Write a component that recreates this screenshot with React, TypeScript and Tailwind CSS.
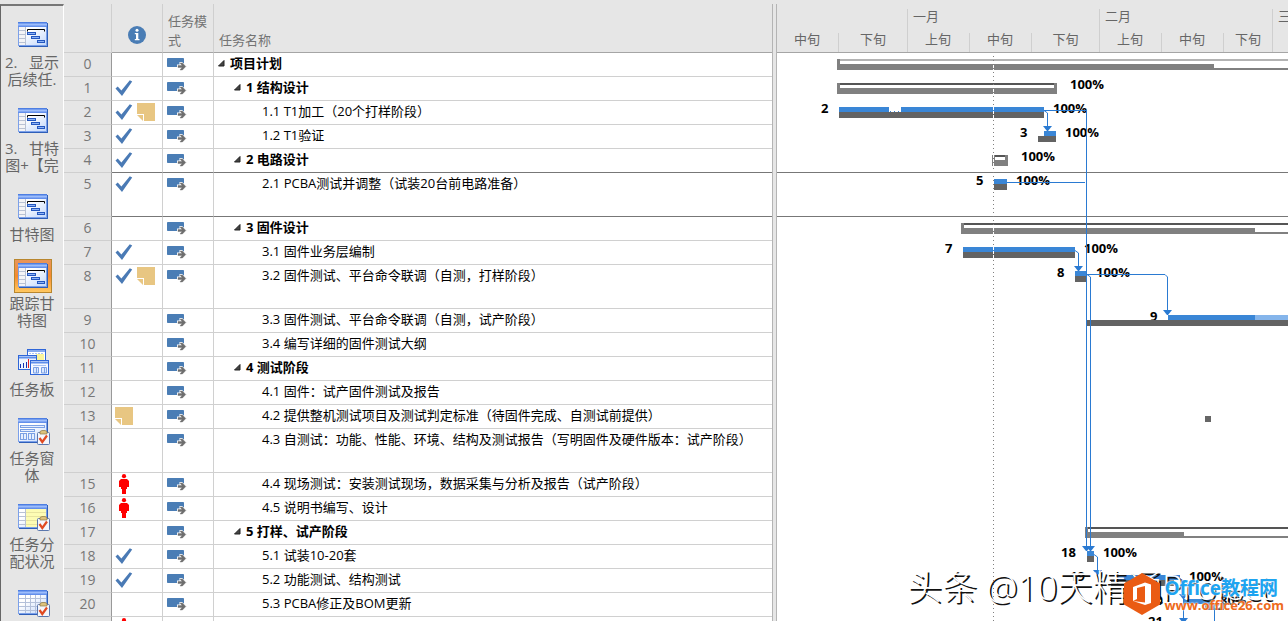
import React from 'react';

type Indicator = 'check' | 'note' | 'person';

interface Task {
  id: number;
  name: string;
  level: 0 | 1 | 2;
  summary?: boolean;
  tall?: boolean;
  marks?: Indicator[];
}

const tasks: Task[] = [
  { id: 0, name: '项目计划', level: 0, summary: true },
  { id: 1, name: '1 结构设计', level: 1, summary: true, marks: ['check'] },
  { id: 2, name: '1.1 T1加工（20个打样阶段）', level: 2, marks: ['check', 'note'] },
  { id: 3, name: '1.2 T1验证', level: 2, marks: ['check'] },
  { id: 4, name: '2 电路设计', level: 1, summary: true, marks: ['check'] },
  { id: 5, name: '2.1 PCBA测试并调整（试装20台前电路准备）', level: 2, tall: true, marks: ['check'] },
  { id: 6, name: '3 固件设计', level: 1, summary: true },
  { id: 7, name: '3.1 固件业务层编制', level: 2, marks: ['check'] },
  { id: 8, name: '3.2 固件测试、平台命令联调（自测，打样阶段）', level: 2, tall: true, marks: ['check', 'note'] },
  { id: 9, name: '3.3 固件测试、平台命令联调（自测，试产阶段）', level: 2 },
  { id: 10, name: '3.4 编写详细的固件测试大纲', level: 2 },
  { id: 11, name: '4 测试阶段', level: 1, summary: true },
  { id: 12, name: '4.1 固件：试产固件测试及报告', level: 2 },
  { id: 13, name: '4.2 提供整机测试项目及测试判定标准（待固件完成、自测试前提供）', level: 2, marks: ['note'] },
  { id: 14, name: '4.3 自测试：功能、性能、环境、结构及测试报告（写明固件及硬件版本：试产阶段）', level: 2, tall: true },
  { id: 15, name: '4.4 现场测试：安装测试现场，数据采集与分析及报告（试产阶段）', level: 2, marks: ['person'] },
  { id: 16, name: '4.5 说明书编写、设计', level: 2, marks: ['person'] },
  { id: 17, name: '5 打样、试产阶段', level: 1, summary: true },
  { id: 18, name: '5.1 试装10-20套', level: 2, marks: ['check'] },
  { id: 19, name: '5.2 功能测试、结构测试', level: 2, marks: ['check'] },
  { id: 20, name: '5.3 PCBA修正及BOM更新', level: 2 },
];

const SELECTED_ID = 5;

const indent = ['pl-1', 'pl-5', 'pl-9'];

/* ---------- grid icons ---------- */

const MarkIcon: React.FC<{ kind: Indicator }> = ({ kind }) => {
  if (kind === 'check') {
    return (
      <svg width="18" height="20" viewBox="0 0 18 20" role="img" aria-label="已完成">
        <path d="M0.5 10.5 L2.7 8.6 L6.4 12.4 L14.8 2.2 L17.2 3.4 L7 18 Z" fill="#4a7ab5" />
      </svg>
    );
  }
  if (kind === 'note') {
    return (
      <svg width="18" height="20" viewBox="0 0 18 20" role="img" aria-label="备注">
        <path d="M0 1 H18 V19 H7 V12 H0 Z" fill="#e8c682" />
        <path d="M0 13 H6 V19 Z" fill="#e8c682" />
      </svg>
    );
  }
  return (
    <svg width="18" height="20" viewBox="0 0 18 20" role="img" aria-label="资源过度分配">
      <circle cx="9" cy="2.2" r="2.1" fill="#ff0000" />
      <path d="M6 5 H12 L14 7 V13 H12 V15 H11 V20 H7 V15 H6 V13 H4 V7 Z" fill="#ff0000" />
    </svg>
  );
};

const ModeIcon = () => (
  <svg width="20" height="13" viewBox="0 0 20 13" role="img" aria-label="自动计划">
    <rect x="0" y="0" width="17" height="9" rx="0.8" fill="#4a7db5" />
    <path d="M10 6.5 H12.5 V4 H15 L18 6.5 V13 H10 Z" fill="#fff" />
    <path d="M11 7.5 H15 L13 5 H15.4 L18.8 8.5 L15.4 12 H13 L15 9.5 H11 Z" fill="#6e6e6e" stroke="#6e6e6e" strokeWidth="0.4" />
  </svg>
);

const InfoIcon = () => (
  <svg width="18" height="18" viewBox="0 0 18 18" role="img" aria-label="标记">
    <circle cx="9" cy="9" r="9" fill="#4a7db5" />
    <circle cx="9" cy="4.3" r="1.5" fill="#fff" />
    <path d="M6.8 7 H10.3 V13 H11.5 V14.2 H6.8 V13 H8 V8.2 H6.8 Z" fill="#fff" />
  </svg>
);

/* ---------- view bar ---------- */

const Clipboard = () => (
  <g>
    <rect x="19.5" y="14.5" width="12" height="12" rx="1" fill="#f4f6fc" stroke="#5b77ad" />
    <path d="M22 14 V13.5 L24 12.5 H27 L29 13.5 V16 H22 Z" fill="#dcc27c" stroke="#8f7a45" strokeWidth="0.7" />
    <path d="M21.5 20 L24.3 24 L29 17.5" fill="none" stroke="#e04a22" strokeWidth="2.2" />
  </g>
);

const WindowFrame: React.FC<{ children?: React.ReactNode }> = ({ children }) => (
  <svg width="32" height="27" viewBox="0 0 32 27" aria-hidden="true">
    <defs>
      <linearGradient id="viewTitle" x1="0" y1="0" x2="0" y2="1">
        <stop offset="0" stopColor="#3a6fdc" />
        <stop offset="0.5" stopColor="#9dbdfb" />
        <stop offset="1" stopColor="#5483e6" />
      </linearGradient>
      <linearGradient id="viewBody" x1="0" y1="0" x2="1" y2="1">
        <stop offset="0.3" stopColor="#fff" />
        <stop offset="1" stopColor="#c3d8fb" />
      </linearGradient>
    </defs>
    <rect x="1" y="1" width="29" height="24" fill="#2f5fb8" />
    <rect x="0" y="0" width="29" height="24" fill="#7ba0ea" />
    <rect x="1" y="5" width="27" height="18" fill="url(#viewBody)" />
    <rect x="0" y="0" width="29" height="5" fill="url(#viewTitle)" />
    {children}
  </svg>
);

const GanttView = () => (
  <WindowFrame>
    <rect x="1" y="5" width="6" height="18" fill="#f4f4f6" />
    <path d="M1 8.5 H7 M1 12.5 H7 M1 16.5 H7 M1 20.5 H7 M7.5 5 V23" stroke="#b9c2d4" />
    <path d="M9.5 9.5 V7.5 H26.5 V9.5" fill="none" stroke="#000" />
    <g fill="#8db3f7" stroke="#2457bf">
      <rect x="9.5" y="10.5" width="8" height="2" />
      <rect x="13.5" y="14.5" width="8" height="2" />
      <rect x="19.5" y="18.5" width="7" height="2" />
    </g>
  </WindowFrame>
);

const FormView = () => (
  <WindowFrame>
    <g fill="#e6effe" stroke="#7ba0e4">
      <rect x="2.5" y="7.5" width="24" height="2" />
      <rect x="2.5" y="11.5" width="14" height="2" />
      <rect x="2.5" y="15.5" width="6" height="6" />
      <rect x="10.5" y="15.5" width="6" height="6" />
    </g>
    <path d="M5.5 15 V22 M13.5 15 V22" stroke="#7ba0e4" />
    <Clipboard />
  </WindowFrame>
);

const UsageView = () => (
  <WindowFrame>
    <rect x="8" y="5" width="20" height="18" fill="#fdfcb4" />
    <path d="M1 8.5 H7 M1 12.5 H7 M1 16.5 H7 M1 20.5 H7 M7.5 5 V23" stroke="#b9c2d4" />
    <path d="M8 8.5 H28 M8 12.5 H28 M8 16.5 H28 M8 20.5 H28" stroke="#e8e4a0" />
    <Clipboard />
  </WindowFrame>
);

const SheetView = () => (
  <WindowFrame>
    <path d="M1 8.5 H28 M1 12.5 H28 M1 16.5 H28 M1 20.5 H28 M7.5 5 V23 M12.5 5 V23 M17.5 5 V23 M22.5 5 V23" stroke="#b4c1da" />
    <Clipboard />
  </WindowFrame>
);

const BoardView = () => (
  <svg width="32" height="27" viewBox="0 0 32 27" aria-hidden="true">
    <rect x="9.5" y="0.5" width="18" height="14" fill="#fff" stroke="#2f66d8" />
    <path d="M10 2 H27" stroke="#5e8eea" strokeWidth="1.5" />
    <path d="M11 4.5 H26" stroke="#a9c3f3" strokeDasharray="2 1" />
    <rect x="18" y="5" width="8" height="6" fill="#fbf59a" />
    <rect x="0.5" y="6.5" width="18" height="14" fill="#eef4ff" stroke="#2f66d8" />
    <path d="M1 8.5 H18" stroke="#5e8eea" strokeWidth="2" />
    <path d="M2.5 15 V19 M5.5 14 V19 M8.5 13 V19" stroke="#1230b0" />
    <path d="M10.5 10 V19" stroke="#e02020" />
    <rect x="12.5" y="11.5" width="18" height="14" fill="#f5f8ff" stroke="#2f66d8" />
    <path d="M13 13.5 H30" stroke="#5e8eea" strokeWidth="2" />
    <path d="M15 16.5 H28" stroke="#a9c3f3" />
    <path d="M15.5 18.5 H20.5 V24 H15.5 Z M23.5 18.5 H28.5 V24 H23.5 Z M18.5 18 V24 M26.5 18 V24" fill="#dbe8ff" stroke="#7ba0e4" />
  </svg>
);

const views = [
  { name: '显示后续任务', lines: ['2.   显示', '后续任.'], icon: GanttView },
  { name: '甘特图+完成', lines: ['3.   甘特', '图+【完'], icon: GanttView },
  { name: '甘特图', lines: ['甘特图'], icon: GanttView },
  { name: '跟踪甘特图', lines: ['跟踪甘', '特图'], icon: GanttView, active: true },
  { name: '任务板', lines: ['任务板'], icon: BoardView },
  { name: '任务窗体', lines: ['任务窗', '体'], icon: FormView },
  { name: '任务分配状况', lines: ['任务分', '配状况'], icon: UsageView },
  { name: '任务工作表', lines: [], icon: SheetView },
];

const ViewBar = () => (
  <nav className="flex w-16 shrink-0 flex-col gap-4 overflow-hidden border-t-2 border-r border-l border-t-[#777] border-r-white border-l-[#666] pt-3">
    {views.map(({ name, lines, icon: Icon, active }) => (
      <button
        key={name}
        type="button"
        aria-label={name}
        className="flex shrink-0 flex-col items-center gap-0.5 text-[15px] leading-[17px] text-[#666]"
      >
        <span
          className={`ml-0.5 flex h-[34px] w-[38px] items-center justify-center border pl-0.5 ${
            active ? 'border-[#b8862e] bg-linear-to-b from-[#e8955a] via-[#f58a2c] to-[#ffc860]' : 'border-transparent'
          }`}
        >
          <Icon />
        </span>
        <span className="flex flex-col items-center">
          {lines.map((line) => (
            <span key={line} className="whitespace-pre">{line}</span>
          ))}
        </span>
      </button>
    ))}
  </nav>
);

/* ---------- task table ---------- */

const TaskRow: React.FC<{ task: Task }> = ({ task }) => {
  const edge = task.id === SELECTED_ID || task.id === SELECTED_ID - 1 ? 'border-b-[#777]' : 'border-b-[#d0d0d0]';
  const cell = `border-b border-r border-r-[#d0d0d0] bg-white p-0 align-top ${edge}`;

  return (
    <tr className={task.tall ? 'h-11' : 'h-6'}>
      <th scope="row" className="border-r border-b border-r-[#999] border-b-[#cfcfcf] p-0 align-top text-sm leading-[21px] font-normal text-[#777]">
        {task.id}
      </th>
      <td className={cell}>
        <div className="flex gap-1 pt-px pl-[3px]">
          {task.marks?.map((m) => <MarkIcon key={m} kind={m} />)}
        </div>
      </td>
      <td className={cell}>
        <div className="pt-[5px] pl-1">
          <ModeIcon />
        </div>
      </td>
      <td className={`border-b bg-white p-0 align-top ${edge}`}>
        <div className={`flex items-center leading-[21px] whitespace-nowrap ${indent[task.level]} ${task.summary ? 'font-bold' : ''}`}>
          <span className="flex w-3 shrink-0">
            {task.summary && (
              <button type="button" aria-label={`折叠 ${task.name}`}>
                <svg width="7" height="7" viewBox="0 0 7 7">
                  <path d="M6 0.5 V6 H0.5 Z" fill="#444" stroke="#222" />
                </svg>
              </button>
            )}
          </span>
          <span>{task.name}</span>
        </div>
      </td>
    </tr>
  );
};

const TaskTable = () => (
  <div className="w-[708px] shrink-0 overflow-hidden">
    <table className="w-full table-fixed border-separate border-spacing-0">
      <colgroup>
        <col className="w-12" />
        <col className="w-[51px]" />
        <col className="w-[51px]" />
        <col />
      </colgroup>
      <thead>
        <tr className="h-[49px] text-left leading-[19px] text-[#737373]">
          <td className="border-r border-b border-[#cfcfcf] p-0" />
          <th scope="col" className="border-r border-b border-r-[#cfcfcf] border-b-[#a5a5a5] p-0 pt-[22px] pl-4 align-top">
            <InfoIcon />
          </th>
          <th scope="col" className="border-r border-b border-r-[#cfcfcf] border-b-[#a5a5a5] p-0 pr-1 pb-0.5 pl-[5px] align-bottom font-normal">
            任务模式
          </th>
          <th scope="col" className="border-b border-b-[#a5a5a5] p-0 pb-0.5 pl-[5px] align-bottom font-normal">
            任务名称
          </th>
        </tr>
      </thead>
      <tbody className="text-black">
        {tasks.map((t) => <TaskRow key={t.id} task={t} />)}
        <tr className="h-6">
          <td className="border-r border-r-[#999] p-0" />
          <td className="border-r border-r-[#d0d0d0] bg-white p-0 pt-px pl-[3px] align-top">
            <MarkIcon kind="person" />
          </td>
          <td className="border-r border-r-[#d0d0d0] bg-white p-0" />
          <td className="bg-white p-0" />
        </tr>
      </tbody>
    </table>
  </div>
);

/* ---------- chart ---------- */

const months = [
  { label: '', width: 'w-[131px]', parts: [['中旬', 'w-[62px]'], ['下旬', 'w-[69px]']] },
  { label: '一月', width: 'w-48', parts: [['上旬', 'w-[62px]'], ['中旬', 'w-[62px]'], ['下旬', 'w-[68px]']] },
  { label: '二月', width: 'w-[173px]', parts: [['上旬', 'w-[62px]'], ['中旬', 'w-[62px]'], ['下旬', 'w-[49px]']] },
  { label: '三月', width: 'w-48', parts: [] },
];

const TimeScale = () => (
  <div className="flex h-[49px] shrink-0 overflow-hidden border-b border-[#a5a5a5] pt-[5px] text-[#666]">
    {months.map((m) => (
      <div key={m.label} className={`flex shrink-0 flex-col border-r border-[#cfcfcf] ${m.width}`}>
        <div className="h-6 pl-[5px] leading-[15px]">{m.label}</div>
        <div className="flex grow">
          {m.parts.map(([label, width]) => (
            <div key={label} className={`shrink-0 border-r border-[#cfcfcf] pr-px text-center leading-[13px] last:border-r-0 ${width}`}>
              {label}
            </div>
          ))}
        </div>
      </div>
    ))}
  </div>
);

// Chart coordinates start at the chart body's top left corner.
const FAR = 2000;

const summaries = [
  { x: 60, y: 6, end: FAR, done: 437, line: '#b3b3b3' },
  { x: 60, y: 30, end: 280, done: 280, line: '#555' },
  { x: 215, y: 102, end: 231, done: 231, line: '#555' },
  { x: 184, y: 170, end: FAR, done: 478, line: '#555' },
  { x: 308, y: 474, end: FAR, done: 407, line: '#555' },
];

const bars = [
  { x: 62, y: 54, w: 50, color: '#3a86d6' },
  { x: 124, y: 54, w: 143, color: '#3a86d6' },
  { x: 267, y: 78, w: 12, color: '#3a86d6' },
  { x: 217, y: 126, w: 13, color: '#3a86d6' },
  { x: 186, y: 194, w: 112, color: '#3a86d6' },
  { x: 298, y: 218, w: 11, color: '#3a86d6' },
  { x: 391, y: 262, w: 87, color: '#3a86d6' },
  { x: 478, y: 262, w: FAR, color: '#85b5eb' },
  { x: 310, y: 498, w: 7, color: '#3a86d6' },
  { x: 340, y: 522, w: 63, color: '#3a86d6' },
  { x: 407, y: 546, w: 30, color: '#3a86d6' },
];

const baselines = [
  { x: 62, y: 59, w: 205 },
  { x: 261, y: 83, w: 18 },
  { x: 217, y: 131, w: 13 },
  { x: 186, y: 199, w: 112 },
  { x: 298, y: 223, w: 11 },
  { x: 309, y: 267, w: FAR },
  { x: 310, y: 503, w: 7 },
  { x: 334, y: 527, w: 63 },
  { x: 428, y: 551, w: 19 },
];

const labels: [number, number, string][] = [
  [293, 36, '100%'],
  [44, 60, '2'], [276, 60, '100%'],
  [243, 84, '3'], [288, 84, '100%'],
  [244, 108, '100%'],
  [199, 132, '5'], [239, 132, '100%'],
  [168, 200, '7'], [307, 200, '100%'],
  [280, 224, '8'], [319, 224, '100%'],
  [373, 268, '9'],
  [284, 504, '18'], [326, 504, '100%'],
  [293, 528, '19'], [412, 528, '100%'],
  [371, 552, '20'], [443, 552, '80%'],
  [371, 573, '21'],
];

const links = [
  'M267 57.5 H309.5 V495',
  'M267 57.5 L270.5 60 V74',
  'M230 129.5 H308',
  'M298 197.5 L301.5 200 V214',
  'M309 221.5 H388 L390.5 224 V258',
  'M310 221.5 L313.5 224 V495',
  'M317 501.5 L320.5 504 V518',
  'M403 525.5 L406.5 528 V566',
  'M437.5 551 V600',
];

const arrows: [number, number][] = [
  [270, 73], [301, 213], [390, 257], [309, 493], [313, 493], [320, 517], [406, 541], [406, 565],
];

const GanttBody = () => (
  <div className="relative min-h-0 grow overflow-hidden bg-white">
    <svg className="block h-full w-full" role="img" aria-label="跟踪甘特图">
      <path d={`M0 119.5 H${FAR} M0 163.5 H${FAR}`} stroke="#777" />
      <g className="font-bold" fill="#000" fontSize="13">
        {labels.map(([x, y, text]) => (
          <text key={`${x}-${y}`} x={x} y={y}>{text}</text>
        ))}
      </g>
      {summaries.map((s) => (
        <g key={s.y} fill="#808080">
          <rect x={s.x} y={s.y} width={s.end - s.x} height="2" fill={s.line} />
          <rect x={s.x} y={s.y} width="3" height="11" />
          <rect x={s.end - 3} y={s.y} width="3" height="11" />
          <rect x={s.x} y={s.y + 9} width={s.end - s.x} height="2" />
          <rect x={s.x} y={s.y + 5} width={s.done - s.x} height="6" />
        </g>
      ))}
      {baselines.map((b) => (
        <rect key={b.y} x={b.x} y={b.y} width={b.w} height="6" fill="#636363" />
      ))}
      {bars.map((b) => (
        <rect key={`${b.x}-${b.y}`} x={b.x} y={b.y} width={b.w} height="5" fill={b.color} />
      ))}
      <path d="M113 58.5 H123" stroke="#3a86d6" strokeDasharray="1 3" />
      {/* status date: grey on the page, white over the bars */}
      <path d={`M216.5 3 V${FAR}`} stroke="#808080" strokeDasharray="1 3" />
      <path d="M216.5 12 V17 M216.5 36 V41 M216.5 54 V65 M216.5 102 V113 M216.5 175 V181 M216.5 194 V205" stroke="#fff" strokeDasharray="3 1" />
      <g fill="none" stroke="#2a7ad2">
        {links.map((d) => <path key={d} d={d} />)}
      </g>
      <g fill="#2a7ad2">
        {arrows.map(([x, y]) => (
          <path key={`${x}-${y}`} d={`M${x - 4} ${y} h9 l-4 5 h-1 z`} />
        ))}
      </g>
      <rect x="428" y="363" width="6" height="6" fill="#666" />
    </svg>

    <div className="absolute right-4 bottom-3 text-[35px] leading-[44px] font-light whitespace-nowrap text-white [text-shadow:2px_2px_0_#111]">
      头条 @10天精通Project
    </div>
    <div className="absolute right-1 bottom-1.5 flex items-center gap-1">
      <svg width="36" height="42" viewBox="0 0 36 42" aria-hidden="true">
        <path d="M18 0 L36 10.5 V31.5 L18 42 L0 31.5 V10.5 Z" fill="#ea5b13" />
        <path d="M9 14 L21 9.5 L27 11.5 V30 L21 32 L9 28 L21 29.5 V13 L13 15 V26 L9 28 Z" fill="#fff" />
      </svg>
      <div className="font-bold whitespace-nowrap">
        <div className="text-[19px] leading-[22px] text-[#1ea4f0] [text-shadow:0_0_2px_#fff,0_0_2px_#fff]">Office教程网</div>
        <div className="text-[13px] leading-[12px] text-[#ee6a1c] [text-shadow:0_0_2px_#fff,0_0_2px_#fff]">www.office26.com</div>
      </div>
    </div>
  </div>
);

export default function App() {
  return (
    <div className="flex h-screen overflow-hidden bg-[#e6e6e6] pt-1 font-['Open_Sans','Noto_Sans_CJK_SC',sans-serif] text-[13px]">
      <ViewBar />
      <TaskTable />
      <div className="w-[5px] shrink-0 border-x border-[#b4b4b4]" />
      <main className="flex min-w-0 grow flex-col">
        <TimeScale />
        <GanttBody />
      </main>
    </div>
  );
}
